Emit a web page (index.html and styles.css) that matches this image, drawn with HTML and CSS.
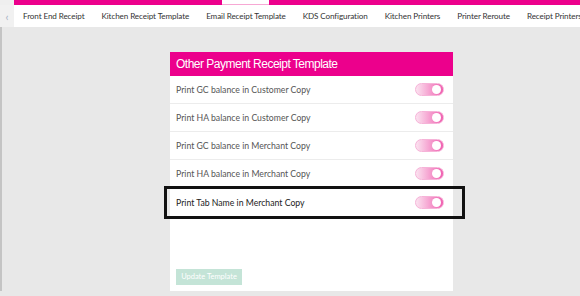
FILE: index.html
```html
<!DOCTYPE html>
<html lang="en">
<head>
  <meta charset="UTF-8" />
  <meta name="viewport" content="width=device-width, initial-scale=1.0"/>
  <title>Other Payment Receipt Template</title>
  <link rel="stylesheet" href="styles.css">
</head>
<body>
  <!-- Top pink strip -->
  <div class="topbar">
    <div class="topbar-pink">
      <span class="topbar-active"></span>
    </div>
  </div>

  <!-- Settings tabs -->
  <div class="nav">
    <div class="nav-arrow">&#8249;</div>
    <div class="nav-items">
      <span>Front End Receipt</span>
      <span>Kitchen Receipt Template</span>
      <span>Email Receipt Template</span>
      <span>KDS Configuration</span>
      <span>Kitchen Printers</span>
      <span>Printer Reroute</span>
      <span>Receipt Printers</span>
    </div>
  </div>

  <div class="page">
    <div class="card">
      <div class="card-header">Other Payment Receipt Template</div>

      <div class="row">
        <span>Print GC balance in Customer Copy</span>
        <span class="toggle"><span class="knob"></span></span>
      </div>
      <div class="row">
        <span>Print HA balance in Customer Copy</span>
        <span class="toggle"><span class="knob"></span></span>
      </div>
      <div class="row">
        <span>Print GC balance in Merchant Copy</span>
        <span class="toggle"><span class="knob"></span></span>
      </div>
      <div class="row">
        <span>Print HA balance in Merchant Copy</span>
        <span class="toggle"><span class="knob"></span></span>
      </div>
      <div class="row row-marked">
        <span>Print Tab Name in Merchant Copy</span>
        <span class="toggle"><span class="knob"></span></span>
      </div>

      <div class="card-footer">
        <button class="btn-update">Update Template</button>
      </div>
    </div>
  </div>
</body>
</html>
```

FILE: styles.css
```css
body {
  margin: 0;
  background: #e8e8e8;
  font-family: Lato, "Open Sans", sans-serif;
  height: 296px;
  overflow: hidden;
}

.topbar {
  height: 5px;
  background: #efefef;
  padding-left: 14px;
}

.topbar-pink {
  height: 100%;
  background: #ec008c;
  display: flex;
}

.topbar-active {
  margin-left: 208px;
  width: 47px;
  height: 4px;
  background: #fff;
  border-bottom: 1px solid #f7a8d4;
}

.nav {
  display: flex;
  height: 22px;
  background: #fff;
}

.nav-arrow {
  flex: 0 0 14px;
  background: #f1f1f1;
  color: #a3aec2;
  font-size: 11px;
  display: flex;
  align-items: center;
  justify-content: center;
}

.nav-items {
  display: flex;
  align-items: center;
  gap: 17px;
  padding-left: 9px;
  font-size: 8.1px;
  letter-spacing: -0.1px;
  color: #333;
  white-space: nowrap;
  overflow: hidden;
}

.page {
  padding-top: 25px;
  padding-left: 168px;
  border-left: 2px solid #c4c4c4;
}

.card {
  width: 283px;
  background: #fff;
}

.card-header {
  height: 24px;
  line-height: 24px;
  background: #ec008c;
  color: #fff;
  font-family: "Liberation Sans", Arial, sans-serif;
  font-size: 12px;
  letter-spacing: -0.5px;
  padding-left: 6px;
}

.row {
  position: relative;
  height: 27px;
  border-bottom: 1px solid #ececec;
  display: flex;
  align-items: center;
  justify-content: space-between;
  padding: 0 9px 0 6px;
  font-size: 8.7px;
  color: #555;
}

.row-marked {
  color: #222;
  border-bottom: none;
  height: 29px;
}

/* black highlight frame drawn over the last row */
.row-marked::after {
  content: "";
  position: absolute;
  top: -2px;
  left: -6px;
  right: -12px;
  bottom: -2px;
  border: 3px solid #111;
}

.toggle {
  width: 29px;
  height: 13px;
  border-radius: 7px;
  background: linear-gradient(to right, #fbe3f0, #f05fb0);
  box-sizing: border-box;
  border: 1px solid #f6b3d8;
  display: flex;
  align-items: center;
  justify-content: flex-end;
  padding-right: 2px;
}

.knob {
  width: 9px;
  height: 9px;
  border-radius: 50%;
  background: #fff;
}

.card-footer {
  padding: 46px 0 6px 6px;
}

.btn-update {
  width: 66px;
  height: 16px;
  border: none;
  background: #c4e4d7;
  color: #fff;
  font-family: Lato, sans-serif;
  font-size: 7.5px;
  padding: 0;
}
```
